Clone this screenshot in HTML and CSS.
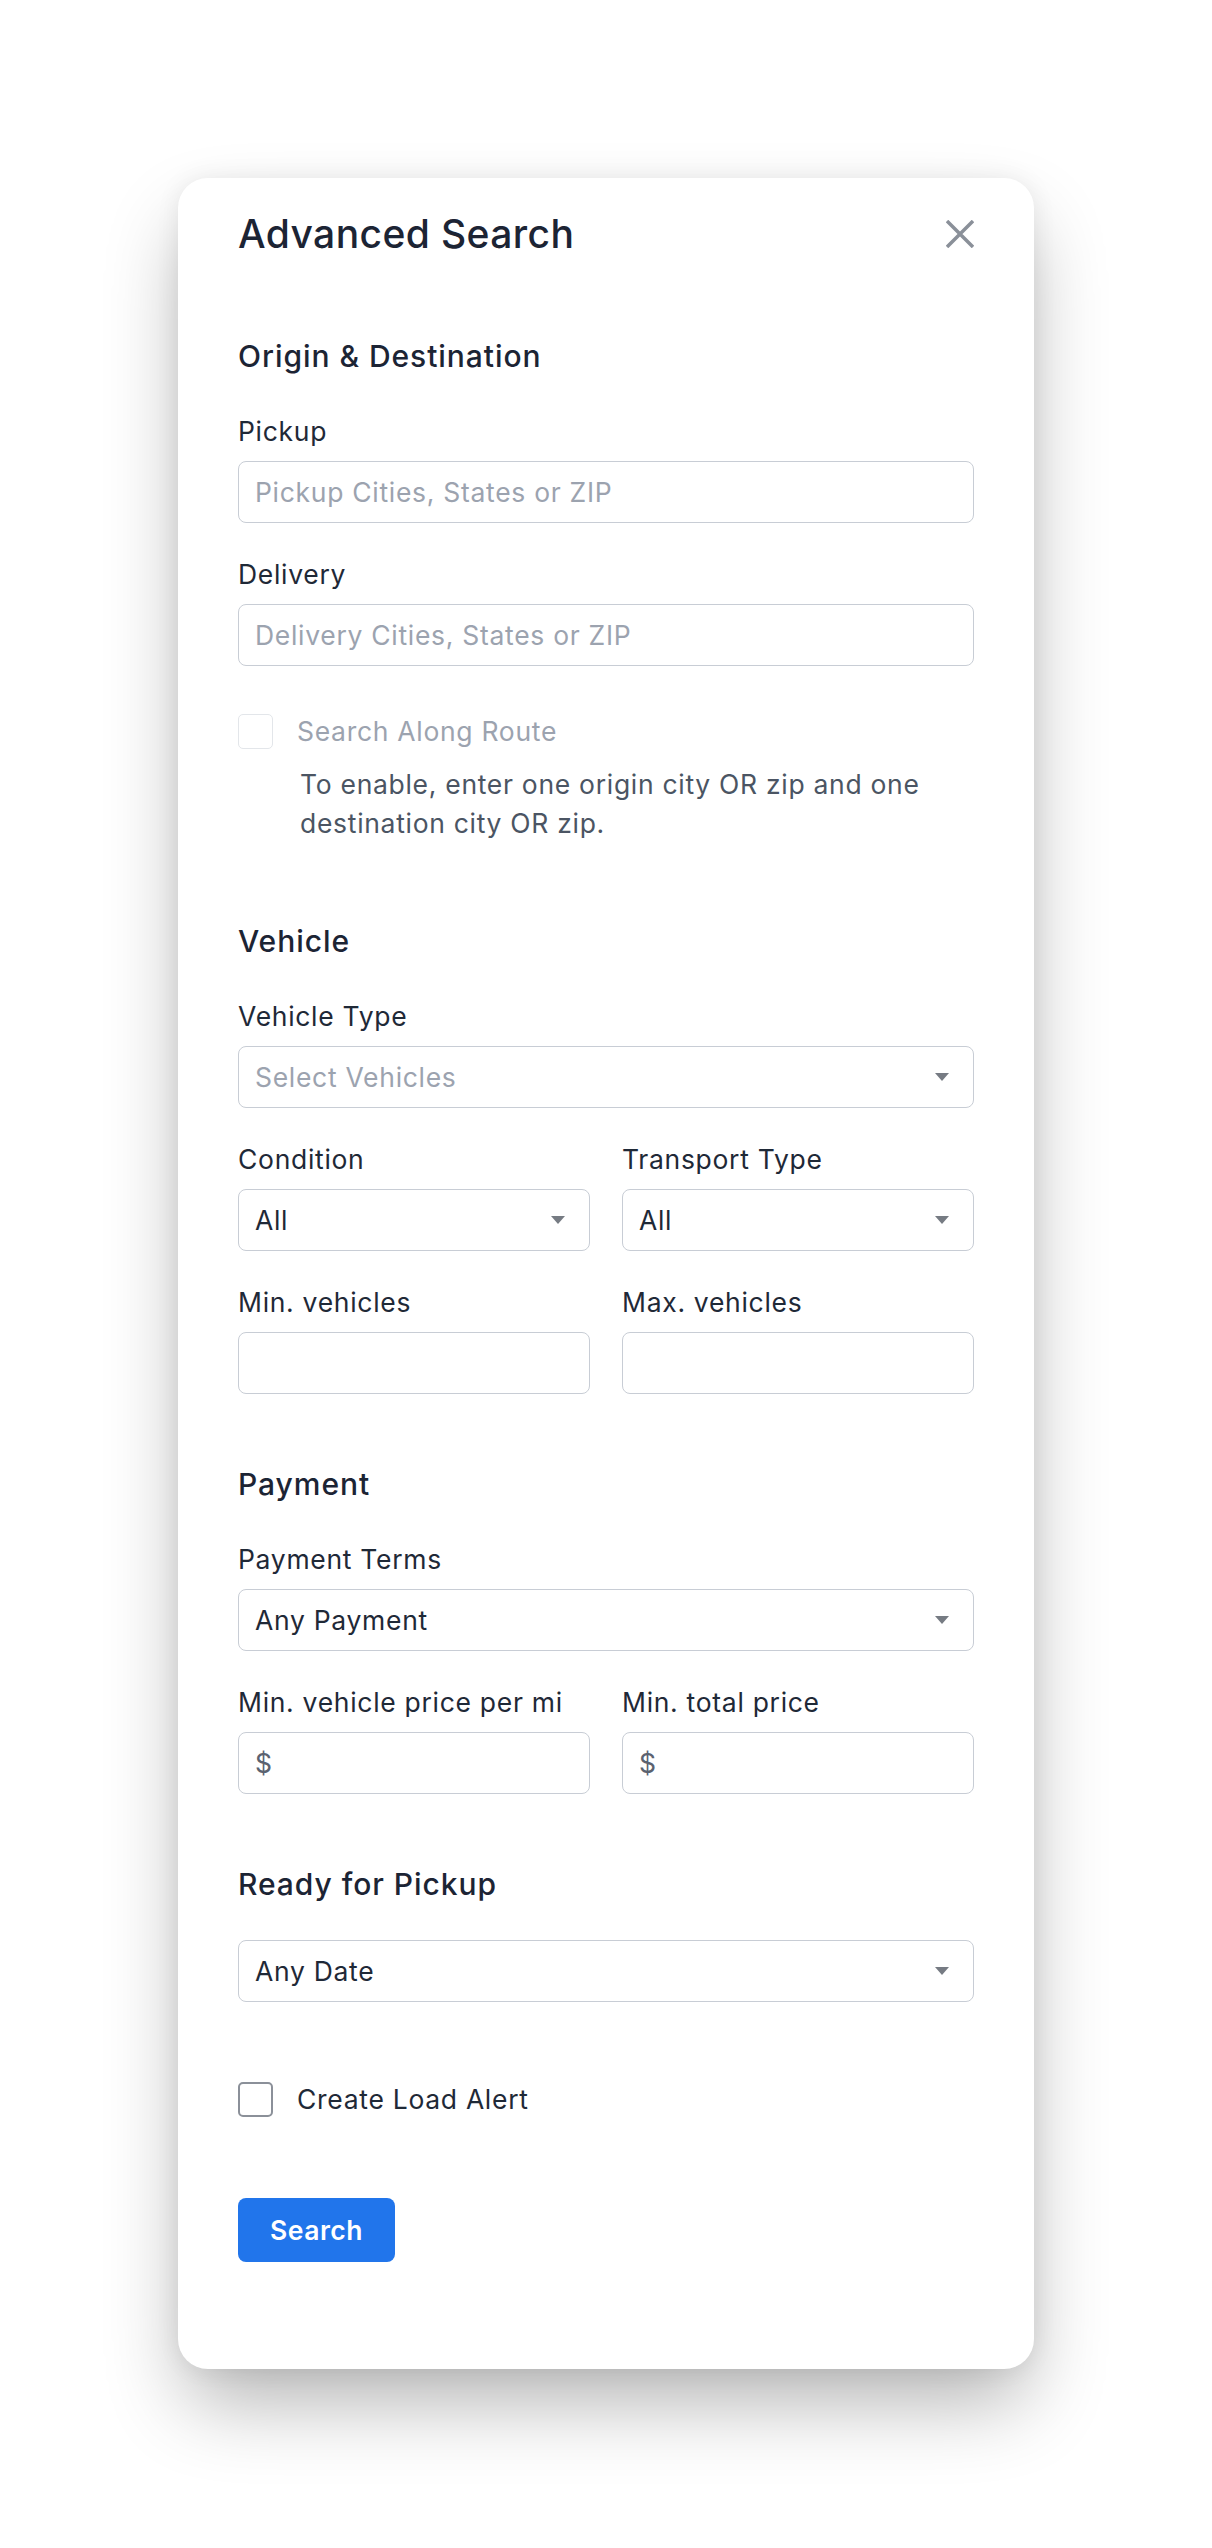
FILE: index.html
```html
<!DOCTYPE html>
<html lang="en">

<head>
    <meta charset="UTF-8">
    <title>Advanced Search</title>
    <link rel="stylesheet" href="styles.css">
</head>

<body>
    <div class="page">
        <div class="modal">
            <div class="modal-header">
                <h1 class="modal-title">Advanced Search</h1>
                <button class="close" aria-label="Close">
                    <svg width="28" height="28" viewBox="0 0 28 28">
                        <path d="M1 1 L27 27 M27 1 L1 27" stroke="#8a9099" stroke-width="3.5" fill="none" />
                    </svg>
                </button>
            </div>

            <!-- origin & destination -->
            <div class="section">
                <h2 class="section-title">Origin &amp; Destination</h2>
                <div class="field">
                    <label for="pickup">Pickup</label>
                    <input class="input" id="pickup" type="text" placeholder="Pickup Cities, States or ZIP">
                </div>
                <div class="field">
                    <label for="delivery">Delivery</label>
                    <input class="input" id="delivery" type="text" placeholder="Delivery Cities, States or ZIP">
                </div>
                <div class="check-row route">
                    <span class="checkbox disabled"></span>
                    <span class="check-label muted">Search Along Route</span>
                </div>
                <p class="hint">To enable, enter one origin city OR zip and one destination city OR zip.</p>
            </div>

            <!-- vehicle -->
            <div class="section">
                <h2 class="section-title">Vehicle</h2>
                <div class="field">
                    <label for="vtype">Vehicle Type</label>
                    <div class="select-wrap">
                        <select class="input select placeholder" id="vtype">
                            <option>Select Vehicles</option>
                        </select>
                    </div>
                </div>
                <div class="row">
                    <div>
                        <label for="condition">Condition</label>
                        <div class="select-wrap">
                            <select class="input select" id="condition">
                                <option>All</option>
                            </select>
                        </div>
                    </div>
                    <div>
                        <label for="transport">Transport Type</label>
                        <div class="select-wrap">
                            <select class="input select" id="transport">
                                <option>All</option>
                            </select>
                        </div>
                    </div>
                </div>
                <div class="row">
                    <div>
                        <label for="minv">Min. vehicles</label>
                        <input class="input" id="minv" type="text">
                    </div>
                    <div>
                        <label for="maxv">Max. vehicles</label>
                        <input class="input" id="maxv" type="text">
                    </div>
                </div>
            </div>

            <!-- payment -->
            <div class="section">
                <h2 class="section-title">Payment</h2>
                <div class="field">
                    <label for="terms">Payment Terms</label>
                    <div class="select-wrap">
                        <select class="input select" id="terms">
                            <option>Any Payment</option>
                        </select>
                    </div>
                </div>
                <div class="row">
                    <div>
                        <label for="ppm">Min. vehicle price per mi</label>
                        <div class="input money">
                            <span class="currency">$</span>
                            <input id="ppm" type="text">
                        </div>
                    </div>
                    <div>
                        <label for="total">Min. total price</label>
                        <div class="input money">
                            <span class="currency">$</span>
                            <input id="total" type="text">
                        </div>
                    </div>
                </div>
            </div>

            <!-- ready for pickup -->
            <div class="section">
                <h2 class="section-title">Ready for Pickup</h2>
                <div class="select-wrap">
                    <select class="input select" id="date">
                        <option>Any Date</option>
                    </select>
                </div>
            </div>

            <div class="check-row alert">
                <span class="checkbox"></span>
                <span class="check-label">Create Load Alert</span>
            </div>

            <button class="search-btn">Search</button>
        </div>
    </div>
</body>

</html>
```

FILE: styles.css
```css
body {
    margin: 0;
    background: #ffffff;
    font-family: Inter, "Noto Sans", sans-serif;
    letter-spacing: 0.7px;
    color: #1f2937;
}

.page {
    padding: 178px 0 180px;
}

.modal {
    width: 856px;
    margin: 0 auto;
    box-sizing: border-box;
    padding: 32px 60px 107px;
    background: #ffffff;
    border-radius: 30px;
    box-shadow: 0 40px 80px -8px rgba(0, 0, 0, 0.3), 0 0 24px rgba(0, 0, 0, 0.07);
}

.modal-header {
    display: flex;
    justify-content: space-between;
    align-items: center;
    height: 48px;
}

.modal-title {
    margin: 0;
    font-size: 39px;
    line-height: 48px;
    font-weight: 500;
    letter-spacing: 0.4px;
    color: #1c2434;
}

.close {
    width: 28px;
    height: 28px;
    padding: 0;
    border: none;
    background: none;
    cursor: pointer;
}

.close svg {
    display: block;
}

.section {
    margin-top: 68px;
}

.modal-header + .section {
    margin-top: 76px;
}

.section-title {
    margin: 0 0 34px;
    font-size: 30px;
    line-height: 44px;
    font-weight: 500;
    letter-spacing: 0.95px;
    color: #1c2434;
}

.field,
.row {
    margin-bottom: 32px;
}

.section > :last-child {
    margin-bottom: 0;
}

.row {
    display: grid;
    grid-template-columns: minmax(0, 1fr) minmax(0, 1fr);
    column-gap: 32px;
}

label {
    display: block;
    margin-bottom: 10px;
    font-size: 26.5px;
    line-height: 39px;
}

.input {
    display: block;
    width: 100%;
    height: 62px;
    box-sizing: border-box;
    padding: 0 16px;
    border: 1.5px solid #c8cdd5;
    border-radius: 8px;
    background: #ffffff;
    font-family: inherit;
    font-size: 26.5px;
    letter-spacing: 0.7px;
    color: #1f2937;
    outline: none;
}

.input::placeholder {
    color: #9ca3af;
}

.select-wrap {
    position: relative;
}

.select {
    appearance: none;
    -webkit-appearance: none;
}

.select.placeholder {
    color: #9ca3af;
}

/* petite fleche du select */
.select-wrap::after {
    content: "";
    position: absolute;
    right: 25px;
    top: 27px;
    border-left: 7px solid transparent;
    border-right: 7px solid transparent;
    border-top: 8px solid #767b83;
    pointer-events: none;
}

.money {
    display: flex;
    align-items: center;
}

.currency {
    color: #5b6270;
    margin-right: 6px;
}

.money input {
    flex: 1;
    width: 100%;
    min-width: 0;
    border: none;
    outline: none;
    padding: 0;
    font-family: inherit;
    font-size: 26.5px;
    background: transparent;
}

.check-row {
    display: flex;
    align-items: center;
    gap: 24px;
    font-size: 26.5px;
    line-height: 39px;
}

.checkbox {
    width: 35px;
    height: 35px;
    box-sizing: border-box;
    border: 2px solid #8b9099;
    border-radius: 5px;
}

.checkbox.disabled {
    border: 1.5px solid #e3e6ea;
}

.muted {
    color: #9ca3af;
}

.route {
    margin-top: 46px;
}

.section > .hint {
    margin: 14px 0 76px 62px;
    font-size: 26.5px;
    line-height: 39px;
    color: #4b5563;
}

.alert {
    margin-top: 78px;
}

.search-btn {
    display: block;
    margin-top: 79px;
    height: 64px;
    padding: 0 32px;
    border: none;
    border-radius: 8px;
    background: #2175eb;
    color: #ffffff;
    font-family: inherit;
    font-size: 26.5px;
    font-weight: 600;
    letter-spacing: 0.5px;
    cursor: pointer;
}
```
